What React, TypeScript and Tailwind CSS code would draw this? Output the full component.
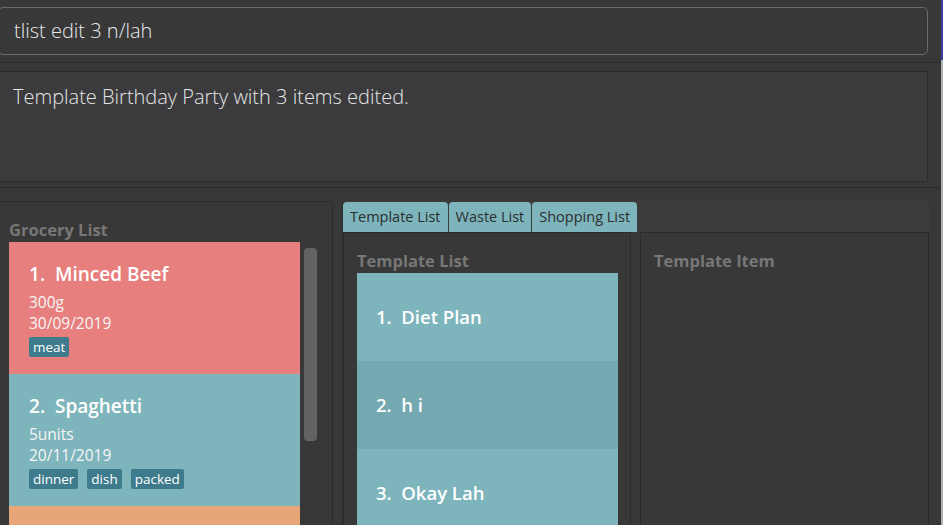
import React from "react";

const font = { fontFamily: '"Open Sans", "Noto Sans", sans-serif' };

type Grocery = { name: string; amount: string; date: string; tags: string[]; color: string };

const groceries: Grocery[] = [
  { name: "Minced Beef", amount: "300g", date: "30/09/2019", tags: ["meat"], color: "bg-[#e77f7e]" },
  { name: "Spaghetti", amount: "5units", date: "20/11/2019", tags: ["dinner", "dish", "packed"], color: "bg-[#7eb4bb]" },
];

const templates = ["Diet Plan", "h i", "Okay Lah"];

function GroceryCard({ g, i }: { g: Grocery; i: number }) {
  return (
    <div className={`${g.color} h-[132px] shrink-0 pl-5 pt-[19px] text-white`}>
      <div className="text-[19px] font-semibold leading-[26px]">
        {i + 1}.&nbsp; {g.name}
      </div>
      <div className="mt-[4px] text-[15.5px] leading-[22px] text-[#f6f6f6]">{g.amount}</div>
      <div className="text-[15.5px] leading-[21px] text-[#f6f6f6]">{g.date}</div>
      <div className="mt-[3px] flex gap-[9px]">
        {g.tags.map((t) => (
          <span key={t} className="rounded-[2px] bg-[#3e7b8c] px-1 text-[13.5px] leading-[20px] text-white">
            {t}
          </span>
        ))}
      </div>
    </div>
  );
}

export default function App() {
  return (
    <div style={font} className="flex h-[525px] w-[943px] overflow-hidden bg-[#383838]">
      <div className="flex w-[941px] flex-col">
        {/* command box */}
        <div className="h-[62px] shrink-0 pt-[7px] pr-[13px]">
          <div className="ml-[-2px] flex h-[48px] items-center rounded-[5px] border-[1.5px] border-[#6b6b6b] bg-[#383838] pl-[15px] text-[20px] font-light text-[#e8e8e8]">
            tlist edit 3 n/lah
          </div>
        </div>
        <div className="h-px shrink-0 bg-[#2d2d2d]" />
        {/* result box */}
        <div className="h-[124px] shrink-0 pt-[8px] pr-[13px]">
          <div className="h-[111px] border border-l-0 border-[#2b2b2b] bg-[#3b3b3d] pl-[13px] pt-[11px] text-[20px] font-light leading-[28px] text-[#e6e6e6]">
            Template Birthday Party with 3 items edited.
          </div>
        </div>
        <div className="h-px shrink-0 bg-[#2b2b2b]" />
        {/* bottom */}
        <div className="flex min-h-0 flex-1 pt-[13px]">
          {/* grocery panel */}
          <div className="flex w-[333px] flex-col border-t border-r border-[#2b2b2b]">
            <div className="pl-[9px] pt-[16px] text-[16.5px] font-bold leading-[24px] text-[#777777]">Grocery List</div>
            <div className="flex min-h-0 flex-1">
              <div className="ml-[9px] flex w-[291px] flex-col overflow-hidden">
                {groceries.map((g, i) => (
                  <GroceryCard key={g.name} g={g} i={i} />
                ))}
                <div className="h-[132px] shrink-0 bg-[#e8a577]" />
              </div>
              <div className="ml-[4px] pt-[6px]">
                <div className="h-[193px] w-[13px] rounded-[4px] bg-[#636363]" />
              </div>
            </div>
          </div>
          <div className="w-[10px] border-r border-[#2c2c2c]" />
          {/* tab pane */}
          <div className="flex min-h-0 flex-1 flex-col pr-[12px]">
            <div className="flex h-[31px] shrink-0 items-end bg-[#3c3c3c]">
              {["Template List", "Waste List", "Shopping List"].map((t, i) => (
                <div
                  key={t}
                  className={`flex h-[30px] items-center rounded-t-[4px] bg-[#7eb4bb] px-[7px] text-[14.5px] text-[#2a2f31] ${i > 0 ? "ml-px" : ""}`}
                >
                  {t}
                </div>
              ))}
            </div>
            <div className="flex min-h-0 flex-1">
              <div className="flex w-[288px] flex-col border-x border-t border-[#2b2b2b] bg-[#383838]">
                <div className="pl-[13px] pt-[16px] text-[16.5px] font-bold leading-[24px] text-[#777777]">Template List</div>
                <div className="ml-[13px] flex min-h-0 w-[261px] flex-col overflow-hidden">
                  {templates.map((t, i) => (
                    <div
                      key={t}
                      className={`flex h-[88px] shrink-0 items-center pl-[19px] text-[18.5px] font-semibold text-white ${i % 2 === 1 ? "bg-[#74a9b1]" : "bg-[#7eb4bb]"}`}
                    >
                      {i + 1}.&nbsp; {t}
                    </div>
                  ))}
                </div>
              </div>
              <div className="w-[9px]" />
              <div className="flex flex-1 flex-col border-x border-t border-[#2b2b2b]">
                <div className="pl-[13px] pt-[16px] text-[16.5px] font-bold leading-[24px] text-[#777777]">Template Item</div>
              </div>
            </div>
          </div>
        </div>
      </div>
      {/* right edge strip */}
      <div className="flex w-[2px] flex-col">
        <div className="h-[60px] bg-[#3b40a0]" />
        <div className="flex-1 bg-[#b0b0b0]" />
      </div>
    </div>
  );
}
